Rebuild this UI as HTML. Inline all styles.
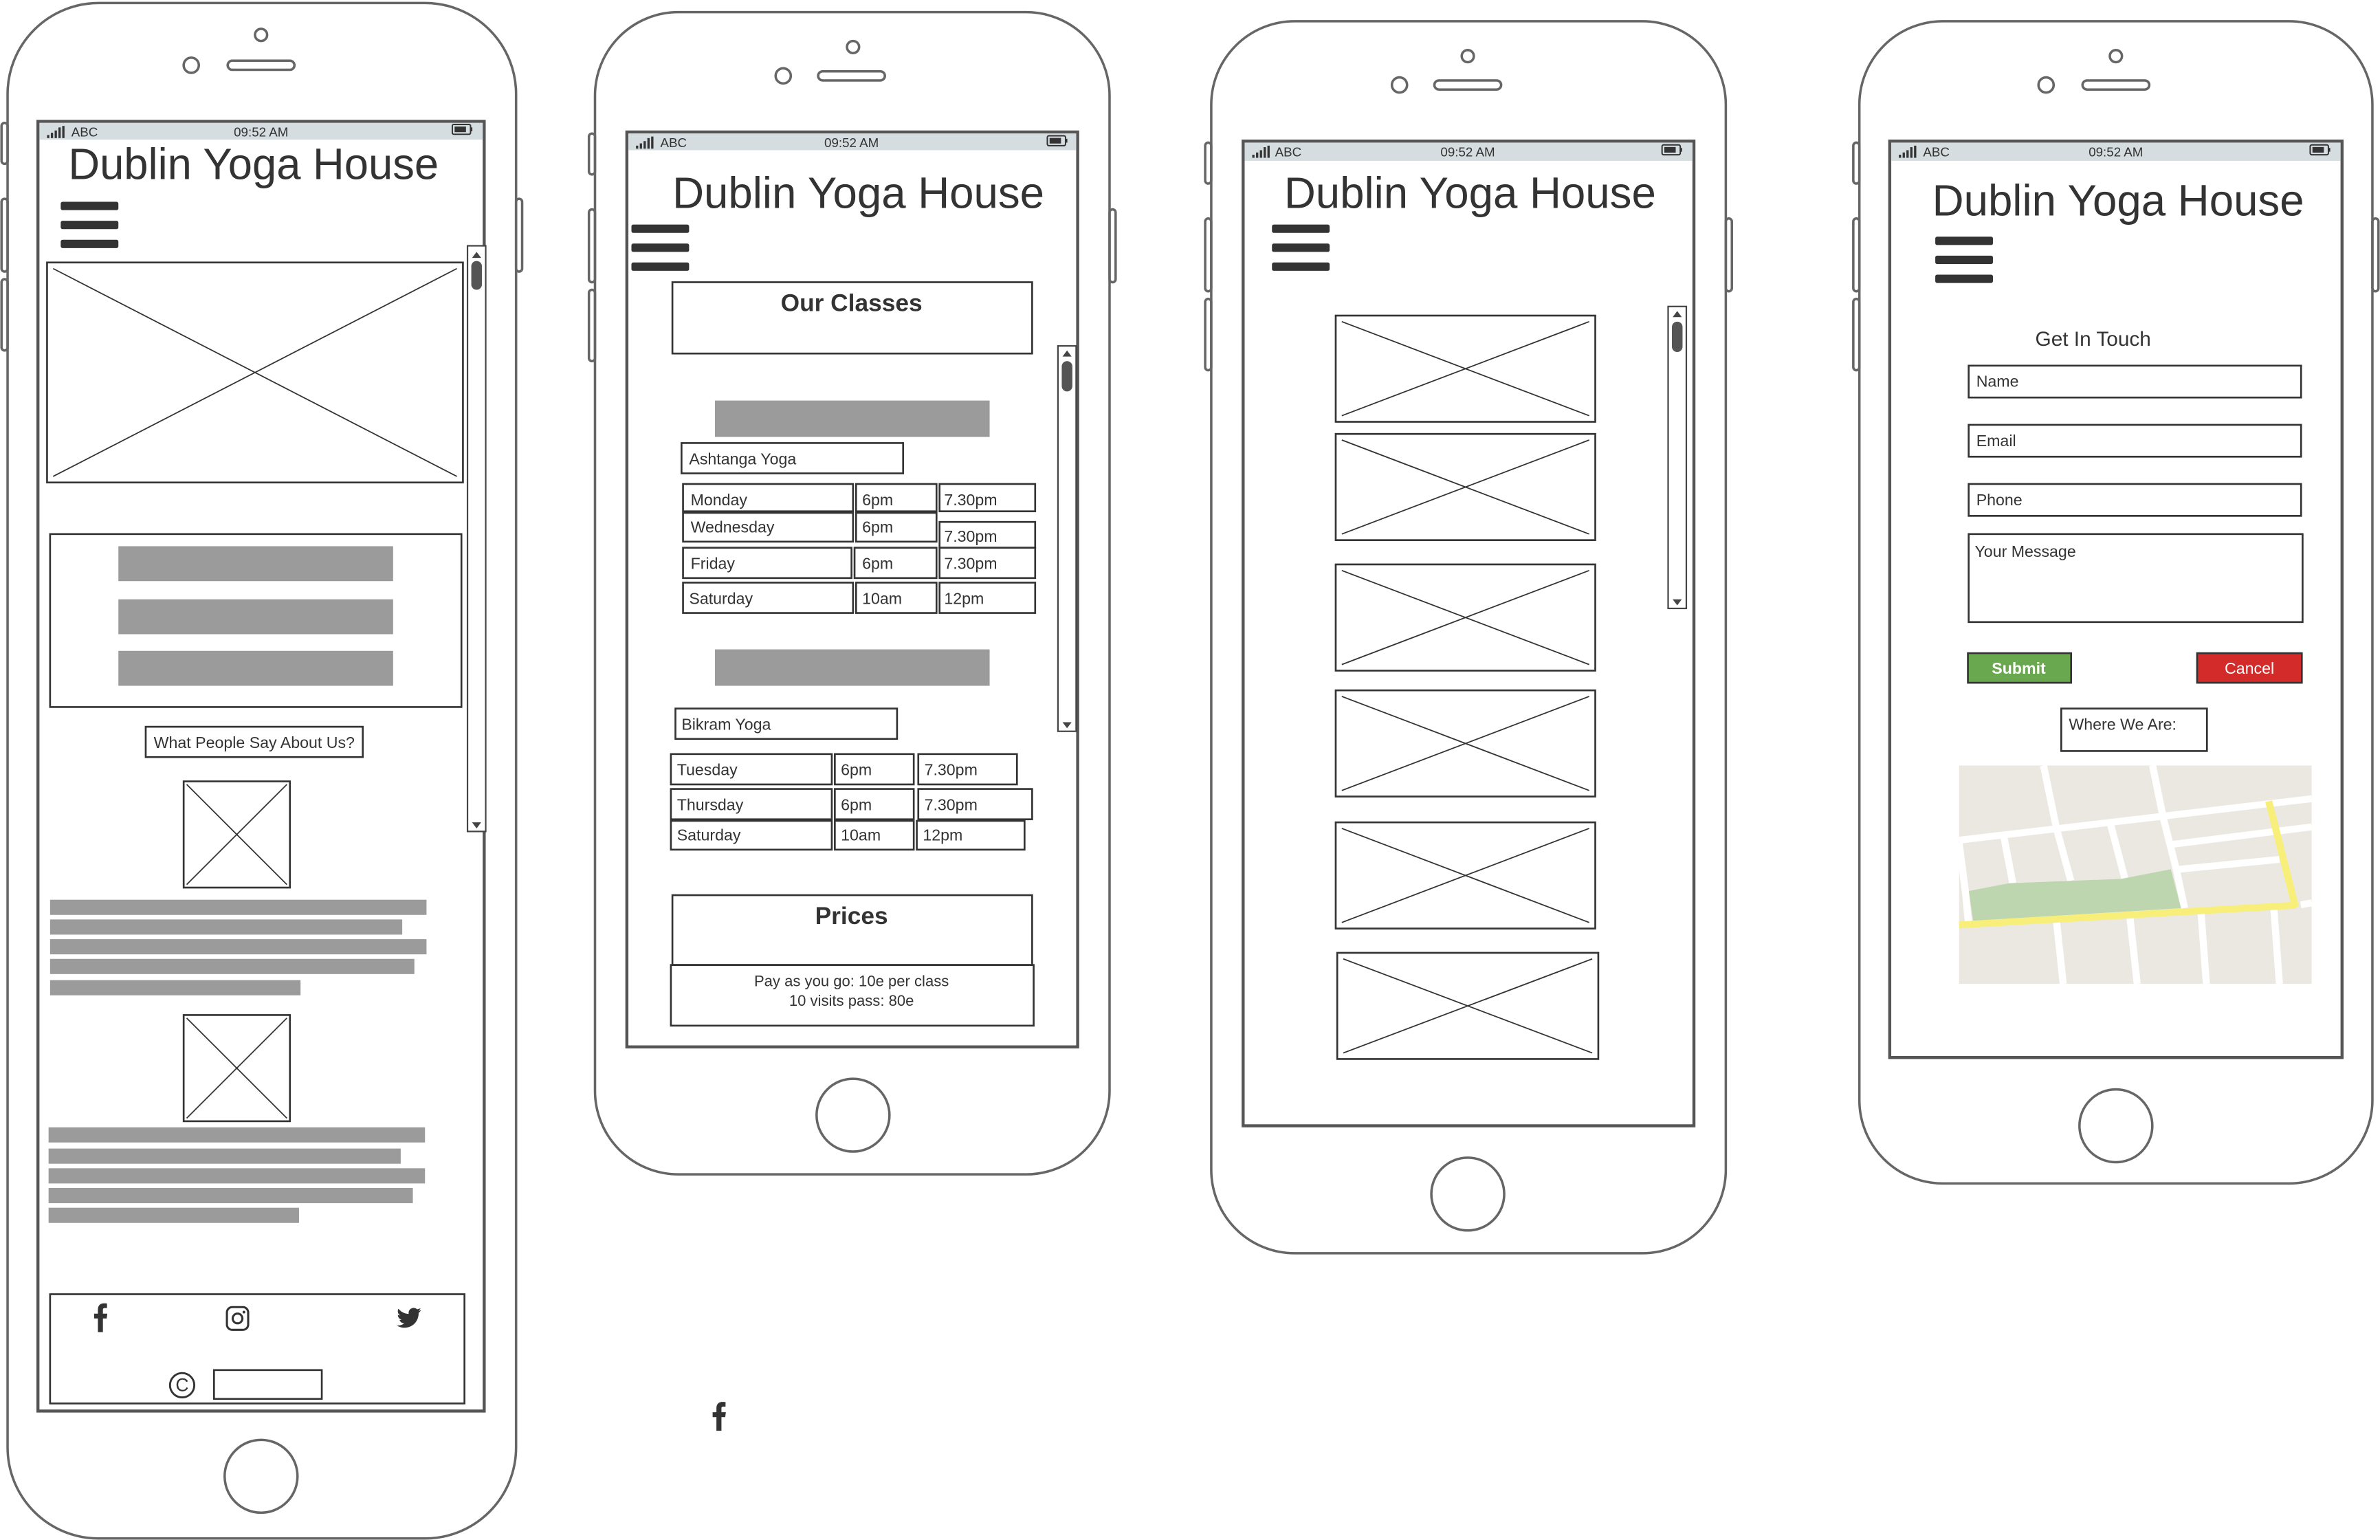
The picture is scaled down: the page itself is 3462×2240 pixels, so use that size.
<!DOCTYPE html>
<html><head><meta charset="utf-8"><style>
html,body{margin:0;padding:0;background:#fff;width:3462px;height:2240px;overflow:hidden}
svg{display:block}
text{font-family:"Liberation Sans",sans-serif;fill:#333}
</style></head><body>
<svg width="3462" height="2240" viewBox="0 0 1568 1015" preserveAspectRatio="none" xmlns="http://www.w3.org/2000/svg">
<defs>
<g id="sig"><rect x="0" y="6" width="1.5" height="2" fill="#333"/><rect x="2.5" y="4.5" width="1.5" height="3.5" fill="#333"/><rect x="5" y="3" width="1.5" height="5" fill="#333"/><rect x="7.5" y="1" width="1.5" height="7" fill="#333"/><rect x="10" y="0" width="1.5" height="8" fill="#333"/></g>
<g id="bat"><rect x="0" y="0" width="12" height="6.5" rx="1" fill="none" stroke="#333" stroke-width="0.9"/><rect x="1.5" y="1.4" width="7.5" height="3.7" fill="#333"/><rect x="12.2" y="2" width="1" height="2.5" fill="#333"/></g>
<g id="ham"><rect x="0" y="0" width="38" height="5.5" rx="1.2" fill="#333"/><rect x="0" y="12.5" width="38" height="5.5" rx="1.2" fill="#333"/><rect x="0" y="25" width="38" height="5.5" rx="1.2" fill="#333"/></g>
</defs>
<g fill="none" stroke="#666" stroke-width="1.6">
<rect x="5" y="2" width="335" height="1012" rx="60"/>
<rect x="1" y="81" width="4" height="27" rx="2"/><rect x="1" y="131" width="4" height="48" rx="2"/><rect x="1" y="184" width="4" height="47" rx="2"/><rect x="340" y="131" width="4" height="48" rx="2"/>
<circle cx="172" cy="23" r="4"/><circle cx="126" cy="43" r="5"/><rect x="150" y="40" width="44" height="6" rx="3"/><circle cx="172" cy="973" r="24"/>
<rect x="392" y="8" width="339" height="766" rx="55"/>
<rect x="388" y="88" width="4" height="27" rx="2"/><rect x="388" y="138" width="4" height="48" rx="2"/><rect x="388" y="191" width="4" height="47" rx="2"/><rect x="731" y="138" width="4" height="48" rx="2"/>
<circle cx="562" cy="31" r="4"/><circle cx="516" cy="50" r="5"/><rect x="539" y="47" width="44" height="6" rx="3"/><circle cx="562" cy="735" r="24"/>
<rect x="798" y="14" width="339" height="812" rx="55"/>
<rect x="794" y="94" width="4" height="27" rx="2"/><rect x="794" y="144" width="4" height="48" rx="2"/><rect x="794" y="197" width="4" height="47" rx="2"/><rect x="1137" y="144" width="4" height="48" rx="2"/>
<circle cx="967" cy="37" r="4"/><circle cx="922" cy="56" r="5"/><rect x="945" y="53" width="44" height="6" rx="3"/><circle cx="967" cy="787" r="24"/>
<rect x="1225" y="14" width="338" height="766" rx="55"/>
<rect x="1221" y="94" width="4" height="27" rx="2"/><rect x="1221" y="144" width="4" height="48" rx="2"/><rect x="1221" y="197" width="4" height="47" rx="2"/><rect x="1563" y="144" width="4" height="48" rx="2"/>
<circle cx="1394" cy="37" r="4"/><circle cx="1348" cy="56" r="5"/><rect x="1372" y="53" width="44" height="6" rx="3"/><circle cx="1394" cy="742" r="24"/>
</g>

<g stroke="#555" stroke-width="2">
<rect x="25" y="80" width="294" height="850" fill="#fff"/><rect x="26" y="81" width="292" height="11" fill="#d6dde1" stroke="none"/>
<rect x="413" y="87" width="297" height="603" fill="#fff"/><rect x="414" y="88" width="295" height="11" fill="#d6dde1" stroke="none"/>
<rect x="819" y="93" width="297" height="649" fill="#fff"/><rect x="820" y="94" width="295" height="12" fill="#d6dde1" stroke="none"/>
<rect x="1245" y="93" width="298" height="604" fill="#fff"/><rect x="1246" y="94" width="296" height="12" fill="#d6dde1" stroke="none"/>
</g>
<use href="#sig" x="31" y="83"/><text x="47" y="90" font-size="8.5">ABC</text><text x="172" y="90" font-size="8.5" text-anchor="middle">09:52 AM</text><use href="#bat" x="298" y="82"/>
<use href="#sig" x="419" y="90"/><text x="435" y="97" font-size="8.5">ABC</text><text x="561" y="97" font-size="8.5" text-anchor="middle">09:52 AM</text><use href="#bat" x="690" y="89.5"/>
<use href="#sig" x="825" y="96"/><text x="840" y="103" font-size="8.5">ABC</text><text x="967" y="103" font-size="8.5" text-anchor="middle">09:52 AM</text><use href="#bat" x="1095" y="95.5"/>
<use href="#sig" x="1251" y="96"/><text x="1267" y="103" font-size="8.5">ABC</text><text x="1394" y="103" font-size="8.5" text-anchor="middle">09:52 AM</text><use href="#bat" x="1522" y="95.5"/>

<text x="45" y="118" font-size="29" textLength="244" lengthAdjust="spacingAndGlyphs">Dublin Yoga House</text>
<text x="443" y="137" font-size="29" textLength="245" lengthAdjust="spacingAndGlyphs">Dublin Yoga House</text>
<text x="846" y="137" font-size="29" textLength="245" lengthAdjust="spacingAndGlyphs">Dublin Yoga House</text>
<text x="1273" y="142" font-size="29" textLength="245" lengthAdjust="spacingAndGlyphs">Dublin Yoga House</text>
<use href="#ham" x="40" y="133"/><use href="#ham" x="416" y="148"/><use href="#ham" x="838" y="148"/><use href="#ham" x="1275" y="156"/>

<g stroke="#444" stroke-width="1" fill="#fff">
<rect x="308" y="162" width="12" height="386"/><rect x="697" y="228" width="12" height="254"/><rect x="1099" y="202" width="12" height="199"/>
</g>
<g fill="#444">
<path d="M311 170h6l-3-4z"/><path d="M311 542h6l-3 4z"/><rect x="310.5" y="172" width="7" height="19" rx="3.5" fill="#555"/>
<path d="M700 235h6l-3-4z"/><path d="M700 476h6l-3 4z"/><rect x="699.5" y="238" width="7" height="20" rx="3.5" fill="#555"/>
<path d="M1102 209h6l-3-4z"/><path d="M1102 395h6l-3 4z"/><rect x="1101.5" y="212" width="7" height="20" rx="3.5" fill="#555"/>
</g>

<g stroke="#333" stroke-width="1.2" fill="none">
<rect x="31" y="173" width="274" height="145"/><path d="M35 177L301 314M301 177L35 314" stroke-width="0.8"/>
<rect x="33" y="352" width="271" height="114"/>
<rect x="96" y="479" width="143" height="20"/>
<rect x="121" y="515" width="70" height="70"/><path d="M123 517L189 583M189 517L123 583" stroke-width="0.8"/>
<rect x="121" y="669" width="70" height="70"/><path d="M123 671L189 737M189 671L123 737" stroke-width="0.8"/>
<rect x="33" y="853" width="273" height="72"/>
<rect x="141" y="903" width="71" height="19"/>
</g>
<g fill="#9b9b9b">
<rect x="78" y="360" width="181" height="23"/><rect x="78" y="395" width="181" height="23"/><rect x="78" y="429" width="181" height="23"/>
<rect x="33" y="593" width="248" height="10"/><rect x="33" y="606" width="232" height="10"/><rect x="33" y="619" width="248" height="10"/><rect x="33" y="632" width="240" height="10"/><rect x="33" y="646" width="165" height="10"/>
<rect x="32" y="743" width="248" height="10"/><rect x="32" y="757" width="232" height="10"/><rect x="32" y="770" width="248" height="10"/><rect x="32" y="783" width="240" height="10"/><rect x="32" y="796" width="165" height="10"/>
</g>
<text x="167.5" y="493" font-size="10.5" text-anchor="middle">What People Say About Us?</text>
<path d="M64.5 878v-9h-2.5v-3.2h2.5v-2.6c0-2.8 1.5-4.2 4-4.200 1 0 1.8.1 2 .1v3h-1.4c-1.2 0-1.3.5-1.3 1.3v2.4h2.9l-.4 3.2h-2.5v9z" fill="#333"/>
<rect x="149.5" y="861.5" width="14" height="15" rx="3.5" fill="none" stroke="#333" stroke-width="1.4"/><circle cx="156.5" cy="869" r="3.2" fill="none" stroke="#333" stroke-width="1.4"/><circle cx="160.7" cy="864.8" r="0.9" fill="#333"/>
<path d="M277.5 863.5c-.6.3-1.2.4-1.9.5.7-.4 1.2-1 1.4-1.8-.6.4-1.3.6-2.1.8-.6-.6-1.5-1-2.4-1-1.8 0-3.3 1.5-3.3 3.3 0 .3 0 .5.1.7-2.7-.1-5.2-1.4-6.800-3.4-.3.5-.4 1-.4 1.7 0 1.1.6 2.1 1.5 2.7-.5 0-1-.2-1.500-.4 0 1.6 1.1 2.9 2.6 3.2-.5.1-1 .2-1.5.1.4 1.3 1.6 2.3 3.1 2.3-1.1.9-2.5 1.4-4.1 1.4h-.8c1.5.9 3.2 1.5 5 1.5 6.1 0 9.4-5 9.4-9.4v-.4c.7-.5 1.2-1.1 1.7-1.8z" fill="#333"/>
<circle cx="120" cy="913" r="8" fill="none" stroke="#333" stroke-width="1.3"/><text x="120" y="917" font-size="12" text-anchor="middle">C</text>
<path d="M472 943v-9h-2.5v-3.2h2.5v-2.6c0-2.8 1.5-4.2 4-4.2 1 0 1.8.1 2 .1v3h-1.4c-1.2 0-1.3.5-1.3 1.3v2.4h2.9l-.4 3.2h-2.5v9z" fill="#333"/>

<g stroke="#333" stroke-width="1.2" fill="none">
<rect x="443" y="186" width="237" height="47"/>
<rect x="449" y="292" width="146" height="20"/>
<rect x="450" y="319" width="112" height="18"/><rect x="564" y="319" width="53" height="18"/><rect x="619" y="319" width="63" height="18"/>
<rect x="450" y="338" width="112" height="19"/><rect x="564" y="338" width="53" height="19"/><rect x="619" y="344" width="63" height="17"/>
<rect x="450" y="361" width="111" height="20"/><rect x="563" y="361" width="54" height="20"/><rect x="619" y="361" width="63" height="20"/>
<rect x="450" y="384" width="112" height="20"/><rect x="564" y="384" width="53" height="20"/><rect x="619" y="384" width="63" height="20"/>
<rect x="445" y="467" width="146" height="20"/>
<rect x="442" y="497" width="106" height="20"/><rect x="550" y="497" width="52" height="20"/><rect x="605" y="497" width="65" height="20"/>
<rect x="442" y="520" width="106" height="20"/><rect x="550" y="520" width="52" height="20"/><rect x="605" y="520" width="75" height="20"/>
<rect x="442" y="541" width="106" height="19"/><rect x="550" y="541" width="52" height="19"/><rect x="604" y="541" width="71" height="19"/>
<rect x="443" y="590" width="237" height="46"/><rect x="442" y="636" width="239" height="40"/>
</g>
<rect x="471" y="264" width="181" height="24" fill="#9b9b9b"/><rect x="471" y="428" width="181" height="24" fill="#9b9b9b"/>
<text x="561" y="205" font-size="16" font-weight="bold" text-anchor="middle">Our Classes</text>
<text x="561" y="609" font-size="16" font-weight="bold" text-anchor="middle">Prices</text>
<text x="561" y="650" font-size="10" text-anchor="middle">Pay as you go: 10e per class</text>
<text x="561" y="663" font-size="10" text-anchor="middle">10 visits pass: 80e</text>
<g font-size="10.5">
<text x="454" y="306">Ashtanga Yoga</text>
<text x="455" y="333">Monday</text><text x="568" y="333">6pm</text><text x="622" y="333">7.30pm</text>
<text x="455" y="351">Wednesday</text><text x="568" y="351">6pm</text><text x="622" y="357">7.30pm</text>
<text x="455" y="375">Friday</text><text x="568" y="375">6pm</text><text x="622" y="375">7.30pm</text>
<text x="454" y="398">Saturday</text><text x="568" y="398">10am</text><text x="622" y="398">12pm</text>
<text x="449" y="481">Bikram Yoga</text>
<text x="446" y="511">Tuesday</text><text x="554" y="511">6pm</text><text x="609" y="511">7.30pm</text>
<text x="446" y="534">Thursday</text><text x="554" y="534">6pm</text><text x="609" y="534">7.30pm</text>
<text x="446" y="554">Saturday</text><text x="554" y="554">10am</text><text x="608" y="554">12pm</text>
</g>

<g stroke="#333" stroke-width="1.2" fill="none">
<rect x="880" y="208" width="171" height="70"/><path d="M884 212L1047 274M1047 212L884 274" stroke-width="0.8"/>
<rect x="880" y="286" width="171" height="70"/><path d="M884 290L1047 352M1047 290L884 352" stroke-width="0.8"/>
<rect x="880" y="372" width="171" height="70"/><path d="M884 376L1047 438M1047 376L884 438" stroke-width="0.8"/>
<rect x="880" y="455" width="171" height="70"/><path d="M884 459L1047 521M1047 459L884 521" stroke-width="0.8"/>
<rect x="880" y="542" width="171" height="70"/><path d="M884 546L1047 608M1047 546L884 608" stroke-width="0.8"/>
<rect x="881" y="628" width="172" height="70"/><path d="M885 632L1049 694M1049 632L885 694" stroke-width="0.8"/>
</g>

<text x="1379" y="228" font-size="13.5" text-anchor="middle">Get In Touch</text>
<g stroke="#333" stroke-width="1.2" fill="none">
<rect x="1297" y="241" width="219" height="21"/><rect x="1297" y="280" width="219" height="21"/><rect x="1297" y="319" width="219" height="21"/><rect x="1297" y="352" width="220" height="58"/>
<rect x="1358" y="467" width="96" height="28"/>
</g>
<rect x="1296.5" y="430.5" width="68" height="19.5" fill="#6aa84f" stroke="#333" stroke-width="1.2"/>
<rect x="1447.5" y="430.5" width="69" height="19.5" fill="#d32a2a" stroke="#333" stroke-width="1.2"/>
<g font-size="10.5">
<text x="1302" y="255">Name</text><text x="1302" y="294">Email</text><text x="1302" y="333">Phone</text><text x="1301" y="367">Your Message</text>
<text x="1363" y="481">Where We Are:</text>
<text x="1330" y="444" text-anchor="middle" font-weight="bold" style="fill:#fff">Submit</text>
<text x="1482" y="444" text-anchor="middle" style="fill:#fff">Cancel</text>
</g>
<svg x="1286.2" y="498.2" width="253" height="158.5" viewBox="0 0 1620 1050" preserveAspectRatio="none">
<rect x="29" y="42" width="1487" height="953" fill="#ebe8e1"/>
<g stroke="#fff" stroke-width="30" fill="none">
<path d="M29 368L1516 187"/><path d="M930 386L1516 310"/><path d="M958 495L1380 452"/><path d="M1470 650L1516 642"/>
<path d="M385 42L440 318L500 545"/><path d="M845 42L890 270L945 495L980 665"/><path d="M218 355L255 555"/><path d="M668 300L728 535"/>
<path d="M29 380L55 590L68 725"/><path d="M440 725L468 995"/><path d="M750 710L780 995"/><path d="M1050 690L1072 995"/><path d="M1357 670L1380 995"/>
</g>
<path d="M70 590L240 556L712 537L922 495L965 665L88 720Z" fill="#bed6af"/>
<g stroke="#f8ef7a" stroke-width="30" fill="none"><path d="M29 738L1450 652"/><path d="M1335 198L1448 660"/></g>
</svg>
</svg>
</body></html>
